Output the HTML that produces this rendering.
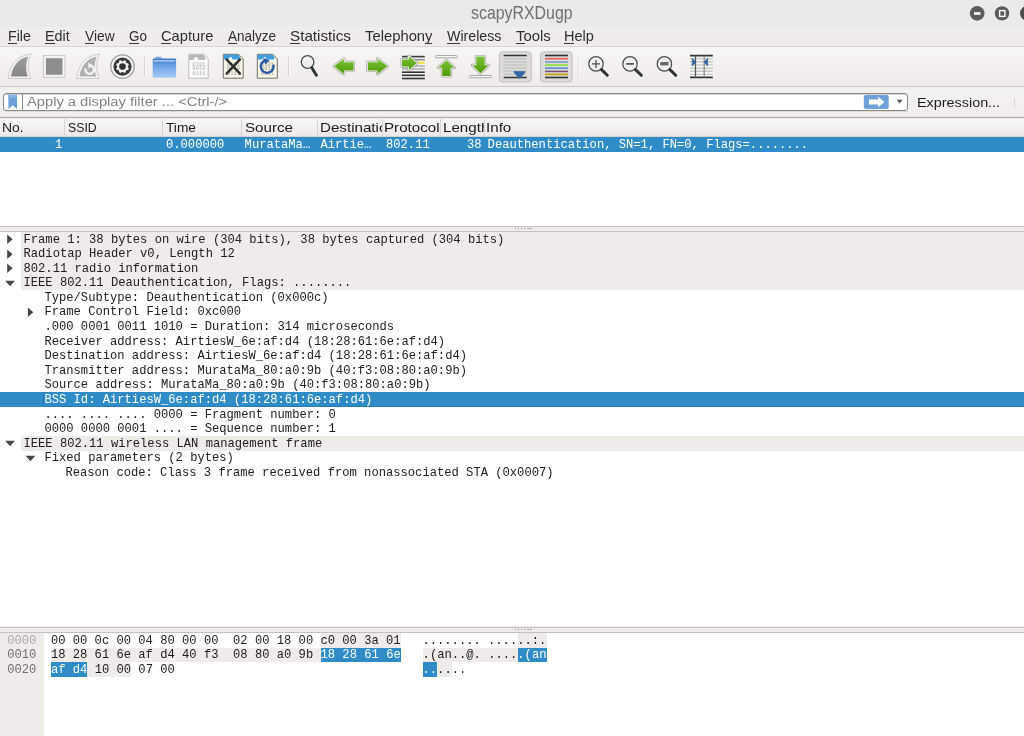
<!DOCTYPE html>
<html><head><meta charset="utf-8"><style>
*{margin:0;padding:0;box-sizing:border-box}
html,body{width:1024px;height:736px;overflow:hidden;background:#efebe7;font-family:"Liberation Sans",sans-serif;position:relative}
.a{position:absolute}
.m{position:absolute;font-family:"Liberation Mono",monospace;white-space:pre;line-height:1}
u{text-decoration:none;position:relative}
</style></head><body>
<div style="position:absolute;left:0;top:0;width:1024px;height:736px;overflow:hidden;will-change:transform">
<div class="a" style="left:0;top:0;width:1024px;height:27px;background:#eaeaea"></div>
<div class="a" style="left:470.52px;top:4.35px;font-size:18.31px;line-height:1;color:#707070;white-space:nowrap;transform-origin:0 0;transform:scaleX(0.8683);">scapyRXDugp</div>
<svg class="a" style="left:0;top:0" width="1024" height="27" viewBox="0 0 1024 27">
<circle cx="977.2" cy="13.4" r="7.3" fill="#5c5c5c"/>
<rect x="974" y="12.2" width="6.5" height="2.6" fill="#fff"/>
<circle cx="1002" cy="13.4" r="7.2" fill="#5c5c5c"/>
<rect x="999.6" y="10.6" width="5.3" height="5.8" fill="none" stroke="#fff" stroke-width="1.4"/>
<circle cx="1027.3" cy="13.4" r="7.3" fill="#4a4a4a"/>
</svg>
<div class="a" style="left:0;top:27px;width:1024px;height:19px;background:linear-gradient(#f0edea,#eeebe7)"></div>
<div class="a" style="left:8.26px;top:28.67px;font-size:14.10px;line-height:1;color:#2e2e2e;white-space:nowrap;transform-origin:0 0;transform:scaleX(1.0078);">File</div>
<div class="a" style="left:8.26px;top:42.8px;width:8.68px;height:1.2px;background:#3a3a3a"></div>
<div class="a" style="left:44.96px;top:28.67px;font-size:14.10px;line-height:1;color:#2e2e2e;white-space:nowrap;transform-origin:0 0;transform:scaleX(1.0151);">Edit</div>
<div class="a" style="left:44.96px;top:42.8px;width:9.55px;height:1.2px;background:#3a3a3a"></div>
<div class="a" style="left:85.13px;top:28.67px;font-size:14.10px;line-height:1;color:#2e2e2e;white-space:nowrap;transform-origin:0 0;transform:scaleX(0.9788);">View</div>
<div class="a" style="left:85.13px;top:42.8px;width:9.20px;height:1.2px;background:#3a3a3a"></div>
<div class="a" style="left:128.73px;top:28.67px;font-size:14.10px;line-height:1;color:#2e2e2e;white-space:nowrap;transform-origin:0 0;transform:scaleX(0.9514);">Go</div>
<div class="a" style="left:128.73px;top:42.8px;width:10.43px;height:1.2px;background:#3a3a3a"></div>
<div class="a" style="left:160.86px;top:28.67px;font-size:14.10px;line-height:1;color:#2e2e2e;white-space:nowrap;transform-origin:0 0;transform:scaleX(1.0434);">Capture</div>
<div class="a" style="left:160.86px;top:42.8px;width:10.62px;height:1.2px;background:#3a3a3a"></div>
<div class="a" style="left:227.63px;top:28.67px;font-size:14.10px;line-height:1;color:#2e2e2e;white-space:nowrap;transform-origin:0 0;transform:scaleX(0.9572);">Analyze</div>
<div class="a" style="left:227.63px;top:42.8px;width:9.00px;height:1.2px;background:#3a3a3a"></div>
<div class="a" style="left:289.91px;top:28.67px;font-size:14.10px;line-height:1;color:#2e2e2e;white-space:nowrap;transform-origin:0 0;transform:scaleX(1.0802);">Statistics</div>
<div class="a" style="left:289.91px;top:42.8px;width:10.16px;height:1.2px;background:#3a3a3a"></div>
<div class="a" style="left:364.83px;top:28.67px;font-size:14.10px;line-height:1;color:#2e2e2e;white-space:nowrap;transform-origin:0 0;transform:scaleX(1.0506);">Telephony</div>
<div class="a" style="left:424.96px;top:42.8px;width:7.41px;height:1.2px;background:#3a3a3a"></div>
<div class="a" style="left:446.93px;top:28.67px;font-size:14.10px;line-height:1;color:#2e2e2e;white-space:nowrap;transform-origin:0 0;transform:scaleX(1.0074);">Wireless</div>
<div class="a" style="left:446.93px;top:42.8px;width:13.41px;height:1.2px;background:#3a3a3a"></div>
<div class="a" style="left:515.88px;top:28.67px;font-size:14.10px;line-height:1;color:#2e2e2e;white-space:nowrap;transform-origin:0 0;transform:scaleX(1.0584);">Tools</div>
<div class="a" style="left:515.88px;top:42.8px;width:9.12px;height:1.2px;background:#3a3a3a"></div>
<div class="a" style="left:563.84px;top:28.67px;font-size:14.10px;line-height:1;color:#2e2e2e;white-space:nowrap;transform-origin:0 0;transform:scaleX(1.0300);">Help</div>
<div class="a" style="left:563.84px;top:42.8px;width:10.49px;height:1.2px;background:#3a3a3a"></div>
<div class="a" style="left:0;top:46px;width:1024px;height:1px;background:#d9d5d1"></div>
<div class="a" style="left:0;top:47px;width:1024px;height:39.5px;background:linear-gradient(#f8f6f4,#eeebe7)"></div>
<div class="a" style="left:0;top:87px;width:1024px;height:30px;background:linear-gradient(#f3f1ee,#f1eeeb)"></div>
<svg class="a" style="left:0;top:46px" width="1024" height="41" viewBox="0 46 1024 41">
<defs>
 <linearGradient id="gfin" x1="0" y1="0" x2="0" y2="1"><stop offset="0" stop-color="#9e9d9a"/><stop offset="1" stop-color="#878684"/></linearGradient>
 <linearGradient id="gfold" x1="0" y1="0" x2="0" y2="1"><stop offset="0" stop-color="#3a78cc"/><stop offset="0.35" stop-color="#6a9fe4"/><stop offset="1" stop-color="#a6ccf8"/></linearGradient>
 <linearGradient id="ggreen" x1="0" y1="0" x2="0" y2="1"><stop offset="0" stop-color="#7cc23a"/><stop offset="1" stop-color="#4e9a06"/></linearGradient>
</defs>
<!-- fin 1 -->
<path d="M8.3,78.5 C9.3,66 16,55.8 31,53.9 C27.6,61 27.2,70 30.7,78.5 Z" fill="#f7f6f4" stroke="#c6c3bf" stroke-width="0.9"/>
<path d="M11,76.6 C12.2,67 17.8,58.6 28.2,56.6 C25.7,63 25.4,70 27.8,76.6 Z" fill="url(#gfin)"/>
<!-- stop -->
<rect x="43.4" y="55.6" width="21.6" height="21.7" fill="#f7f6f4" stroke="#c6c3bf" stroke-width="0.9"/>
<rect x="45.9" y="58.2" width="16.6" height="16.6" fill="#8e8d8a"/>
<!-- restart fin -->
<path d="M76.8,78.5 C77.8,66 84.5,55.8 99.5,53.9 C96.1,61 95.7,70 99.2,78.5 Z" fill="#f7f6f4" stroke="#c6c3bf" stroke-width="0.9"/>
<path d="M79.5,76.6 C80.7,67 86.3,58.6 96.7,56.6 C94.2,63 93.9,70 96.3,76.6 Z" fill="#b2b1ae"/>
<path d="M85.6,68.6 A4.2,4.2 0 1 0 90.6,65.6" fill="none" stroke="#f7f6f4" stroke-width="2.3"/>
<path d="M88.2,62.6 L92.6,65.6 L88.4,68.6 Z" fill="#f7f6f4"/>
<!-- gear -->
<circle cx="122.5" cy="66.6" r="11.7" fill="#f6f5f3" stroke="#9c9c9a" stroke-width="1.3"/>
<circle cx="122.5" cy="66.6" r="9.1" fill="#3a3a3a"/>
<g fill="#f4f4f2" transform="rotate(22.5 122.5 66.6)">
 <circle cx="122.5" cy="66.6" r="5.4"/>
 <rect x="121.2" y="60.1" width="2.6" height="13" rx="0.6"/>
 <rect x="116" y="65.3" width="13" height="2.6" rx="0.6"/>
 <rect x="121.2" y="60.1" width="2.6" height="13" rx="0.6" transform="rotate(45 122.5 66.6)"/>
 <rect x="121.2" y="60.1" width="2.6" height="13" rx="0.6" transform="rotate(-45 122.5 66.6)"/>
</g>
<circle cx="122.5" cy="66.6" r="3.3" fill="#333"/>
<!-- sep -->
<rect x="144" y="57" width="1" height="20" fill="#d8d4d0"/><rect x="145" y="57" width="1" height="20" fill="#fbfaf9"/>
<!-- folder -->
<path d="M154.9,58.8 L155.8,56.8 L161,56.8 L161.8,58.8 Z" fill="#7aa5e0"/>
<rect x="152.7" y="58.6" width="23.4" height="19.1" rx="1.2" fill="url(#gfold)"/>
<rect x="153.5" y="60.2" width="21.8" height="1.4" fill="#c0d6f0" opacity="0.9"/>
<!-- doc gray -->
<path d="M188.8,54.3 L203.6,54.3 L208.2,58.9 L208.2,78.2 L188.8,78.2 Z" fill="#fcfbf9" stroke="#b5b4b1" stroke-width="0.9"/>
<path d="M189.2,54.7 L203.4,54.7 L205.2,57.5 L205.2,60 L198,60 C197.5,57.5 196.8,56.8 196,57 C194.5,57.6 193.6,59 193.5,60 L189.2,60 Z" fill="#b9b8b5"/>
<g fill="#c4c3c0" font-family="Liberation Mono" font-size="5.6" font-weight="bold"><text x="192.3" y="65.6">0101</text><text x="192.3" y="70.3">0010</text><text x="192.3" y="75">0111</text></g>
<!-- doc close -->
<path d="M223.3,54.3 L238.5,54.3 L243.2,59 L243.2,78.2 L223.3,78.2 Z" fill="#f7f6e6" stroke="#6e6e6c" stroke-width="1"/>
<path d="M223.8,54.8 L238.3,54.8 L240,57 L240,59.6 L232.5,59.6 C232.2,57.5 231.5,56.8 230.6,57.1 C229,57.6 228.2,58.8 228,59.6 L223.8,59.6 Z" fill="#3d9fe0"/>
<g fill="#b8b8b0" font-family="Liberation Mono" font-size="5.6" font-weight="bold"><text x="226.8" y="65.6">0101</text><text x="226.8" y="70.3">0010</text><text x="226.8" y="75">0111</text></g>
<path d="M226.6,59.4 L240,73.6 M240,59.4 L226.6,73.6" stroke="#2c2c2c" stroke-width="2.3" stroke-linecap="round"/>
<!-- doc reload -->
<path d="M257.3,54.3 L272.8,54.3 L277.3,59 L277.3,78.2 L257.3,78.2 Z" fill="#f7f6e6" stroke="#6e6e6c" stroke-width="1"/>
<path d="M257.8,54.8 L272.5,54.8 L274.2,57 L274.2,59.6 L266.5,59.6 C266.2,57.5 265.5,56.8 264.6,57.1 C263,57.6 262.2,58.8 262,59.6 L257.8,59.6 Z" fill="#3d9fe0"/>
<g fill="#b8b8b0" font-family="Liberation Mono" font-size="5.6" font-weight="bold"><text x="260.8" y="65.6">0101</text><text x="260.8" y="70.3">0010</text><text x="260.8" y="75">0111</text></g>
<path d="M264.5,60.6 A6.4,6.4 0 1 0 273.3,64.6" fill="none" stroke="#2a58a6" stroke-width="2.4"/>
<path d="M263,58 L269.8,60.3 L265.3,64.6 Z" fill="#2a58a6"/>
<!-- sep -->
<rect x="288" y="57" width="1" height="20" fill="#d8d4d0"/><rect x="289" y="57" width="1" height="20" fill="#fbfaf9"/>
<!-- search -->
<circle cx="307.6" cy="62" r="6.3" fill="#efefed" stroke="#4a4d4e" stroke-width="1.25"/>
<path d="M304.5,59.5 A3.5,3.5 0 0 1 307.5,58" stroke="#fff" stroke-width="1" fill="none"/>
<path d="M311.8,67.8 L316.4,75.2" stroke="#2e3436" stroke-width="3" stroke-linecap="round"/>
<!-- back -->
<path d="M333.9,66.3 L343.9,58.7 L343.9,62.3 L353.6,62.3 L353.6,70.4 L343.9,70.4 L343.9,74 Z" fill="none" stroke="#9a9a98" stroke-width="2.9" stroke-linejoin="round"/><path d="M333.9,66.3 L343.9,58.7 L343.9,62.3 L353.6,62.3 L353.6,70.4 L343.9,70.4 L343.9,74 Z" fill="none" stroke="#ffffff" stroke-width="1.5" stroke-linejoin="round"/><path d="M333.9,66.3 L343.9,58.7 L343.9,62.3 L353.6,62.3 L353.6,70.4 L343.9,70.4 L343.9,74 Z" fill="url(#ggreen)"/>
<!-- forward -->
<path d="M387.5,66.3 L377.5,58.7 L377.5,62.3 L367.8,62.3 L367.8,70.4 L377.5,70.4 L377.5,74 Z" fill="none" stroke="#9a9a98" stroke-width="2.9" stroke-linejoin="round"/><path d="M387.5,66.3 L377.5,58.7 L377.5,62.3 L367.8,62.3 L367.8,70.4 L377.5,70.4 L377.5,74 Z" fill="none" stroke="#ffffff" stroke-width="1.5" stroke-linejoin="round"/><path d="M387.5,66.3 L377.5,58.7 L377.5,62.3 L367.8,62.3 L367.8,70.4 L377.5,70.4 L377.5,74 Z" fill="url(#ggreen)"/>
<!-- goto packet -->
<g stroke-width="1.6">
 <path d="M402,56.6 H424.8" stroke="#3a3d3e"/>
 <path d="M402,59.7 H424.8" stroke="#8a8c88"/>
 <path d="M402,66 H424.8" stroke="#b0b2ae"/>
 <path d="M402,69 H424.8" stroke="#b0b2ae"/>
 <path d="M402,72.2 H424.8" stroke="#2e3436"/>
 <path d="M402,75.3 H424.8" stroke="#2e3436"/>
 <path d="M402,78.5 H424.8" stroke="#2e3436"/>
 <path d="M416,62.8 H424.8" stroke="#f0e040" stroke-width="2"/>
</g>
<path d="M416.8,63 L408.8,56 L408.8,59.4 L402,59.4 L402,66.6 L408.8,66.6 L408.8,70 Z" fill="none" stroke="#9a9a98" stroke-width="2.9" stroke-linejoin="round"/><path d="M416.8,63 L408.8,56 L408.8,59.4 L402,59.4 L402,66.6 L408.8,66.6 L408.8,70 Z" fill="none" stroke="#ffffff" stroke-width="1.5" stroke-linejoin="round"/><path d="M416.8,63 L408.8,56 L408.8,59.4 L402,59.4 L402,66.6 L408.8,66.6 L408.8,70 Z" fill="url(#ggreen)"/>
<!-- first -->
<rect x="435.4" y="55.6" width="22" height="2.2" rx="1.1" fill="#fff" stroke="#8e8e8c" stroke-width="0.8"/>
<path d="M446.4,60.3 L454.6,67.8 L450.6,67.8 L450.6,76 L442.2,76 L442.2,67.8 L438.2,67.8 Z" fill="none" stroke="#9a9a98" stroke-width="2.9" stroke-linejoin="round"/><path d="M446.4,60.3 L454.6,67.8 L450.6,67.8 L450.6,76 L442.2,76 L442.2,67.8 L438.2,67.8 Z" fill="none" stroke="#ffffff" stroke-width="1.5" stroke-linejoin="round"/><path d="M446.4,60.3 L454.6,67.8 L450.6,67.8 L450.6,76 L442.2,76 L442.2,67.8 L438.2,67.8 Z" fill="url(#ggreen)"/>
<!-- last -->
<path d="M480.5,73.2 L488.7,65.2 L484.7,65.2 L484.7,56.6 L476.3,56.6 L476.3,65.2 L472.3,65.2 Z" fill="none" stroke="#9a9a98" stroke-width="2.9" stroke-linejoin="round"/><path d="M480.5,73.2 L488.7,65.2 L484.7,65.2 L484.7,56.6 L476.3,56.6 L476.3,65.2 L472.3,65.2 Z" fill="none" stroke="#ffffff" stroke-width="1.5" stroke-linejoin="round"/><path d="M480.5,73.2 L488.7,65.2 L484.7,65.2 L484.7,56.6 L476.3,56.6 L476.3,65.2 L472.3,65.2 Z" fill="url(#ggreen)"/>
<rect x="469.5" y="75.5" width="22" height="2.2" rx="1.1" fill="#fff" stroke="#8e8e8c" stroke-width="0.8"/>
<!-- pressed 1 -->
<rect x="499.3" y="51.8" width="32" height="30.2" rx="3.2" fill="#dddbd8" stroke="#c2beba" stroke-width="1"/>
<g stroke-width="1.5">
 <path d="M503.7,55.5 H526.7" stroke="#2e3436"/>
 <path d="M503.7,58.7 H526.7 M503.7,62 H526.7 M503.7,65 H526.7 M503.7,68 H526.7 M503.7,71 H526.7 M503.7,74.2 H526.7" stroke="#c5c9c3"/>
 <path d="M503.7,77.5 H526.7" stroke="#2e3436"/>
</g>
<path d="M514,71.8 L525,71.8 L519.5,78.2 Z" fill="#3465a4" stroke="#3465a4" stroke-width="1.2" stroke-linejoin="round"/>
<rect x="536.3" y="57" width="1" height="20" fill="#fbfaf9"/>
<!-- pressed 2 -->
<rect x="540.6" y="51.8" width="31.5" height="30.2" rx="3.2" fill="#dddbd8" stroke="#c2beba" stroke-width="1"/>
<g stroke-width="1.6">
 <path d="M545,55.5 H568" stroke="#2e3436"/>
 <path d="M545,58.7 H568" stroke="#e85c5c"/>
 <path d="M545,62 H568" stroke="#729fcf"/>
 <path d="M545,65 H568" stroke="#8ae234"/>
 <path d="M545,68.2 H568" stroke="#5f8fc7"/>
 <path d="M545,71.4 H568" stroke="#75507b"/>
 <path d="M545,74.4 H568" stroke="#c4a000"/>
 <path d="M545,77.5 H568" stroke="#2e3436"/>
</g>
<rect x="577.7" y="57" width="1" height="20" fill="#d8d4d0"/><rect x="578.7" y="57" width="1" height="20" fill="#fbfaf9"/>
<!-- zoom in/out/1:1 -->
<g>
 <circle cx="596" cy="63.9" r="7.2" fill="#efefed" stroke="#4a4d4e" stroke-width="1.25"/>
 <path d="M601.5,69.6 L607.3,75.3" stroke="#2e3436" stroke-width="3" stroke-linecap="round"/>
 <path d="M592,63.9 H600 M596,59.9 V67.9" stroke="#4a4d4e" stroke-width="1.25"/>
 <circle cx="630" cy="63.9" r="7.2" fill="#efefed" stroke="#4a4d4e" stroke-width="1.25"/>
 <path d="M635.5,69.6 L641.3,75.3" stroke="#2e3436" stroke-width="3" stroke-linecap="round"/>
 <path d="M626.2,63.9 H633.8" stroke="#555" stroke-width="1.8"/>
 <circle cx="664.4" cy="63.9" r="7.2" fill="#efefed" stroke="#4a4d4e" stroke-width="1.25"/>
 <path d="M669.9,69.6 L675.7,75.3" stroke="#2e3436" stroke-width="3" stroke-linecap="round"/>
 <rect x="660.3" y="62" width="8.2" height="3.4" fill="#666"/>
</g>
<!-- resize columns -->
<g>
 <rect x="690" y="55.6" width="22.8" height="22" fill="#f6f6f4"/>
 <path d="M690,58.65 H712.8 M690,61.7 H712.8 M690,64.9 H712.8 M690,68.2 H712.8 M690,71.2 H712.8 M690,74.4 H712.8" stroke="#c5c9c3" stroke-width="1.4"/>
 <path d="M690,55.6 H712.8 M690,77.4 H712.8" stroke="#2e3436" stroke-width="1.6"/>
 <path d="M695.5,55.6 V77.4" stroke="#555753" stroke-width="1.2"/>
 <path d="M704.2,55.6 V77.4" stroke="#888a85" stroke-width="1.2"/>
 <path d="M692.3,58.6 L696,62.2 L692.3,65.8 Z" fill="#3465a4" stroke="#3465a4" stroke-width="0.8" stroke-linejoin="round"/>
 <path d="M707.6,58.6 L704,62.2 L707.6,65.8 Z" fill="#3465a4" stroke="#3465a4" stroke-width="0.8" stroke-linejoin="round"/>
</g>
</svg>
<div class="a" style="left:0;top:86px;width:1024px;height:1px;background:#cbc7c3"></div>
<div class="a" style="left:3.4px;top:92.5px;width:904.4px;height:18.6px;background:#fff;border:1px solid #8b8885;border-radius:3px;box-shadow:inset 0 1px 0 #d8d5d2"></div>
<div class="a" style="left:22px;top:93.5px;width:1px;height:17px;background:#8f8c88"></div>
<svg class="a" style="left:0;top:87px" width="30" height="30" viewBox="0 87 30 30"><path d="M8.4,94.8 H17.1 V109 L12.75,105.2 L8.4,109 Z" fill="#6d9fd9"/><path d="M8.4,94.8 H17.1 V98 H8.4Z" fill="#88b2e2"/></svg>
<svg class="a" style="left:850px;top:87px" width="70" height="30" viewBox="850 87 70 30">
<rect x="863.8" y="95" width="24.9" height="13.9" rx="2" fill="#6fa1da"/>
<path d="M869,99.6 H878 V96.8 L884.5,102 L878,107.2 V104.4 H869 Z" fill="#fff"/>
<path d="M896.8,99.8 H902.6 L899.7,103.4 Z" fill="#555"/>
</svg>
<div class="a" style="left:1013.5px;top:98px;width:1px;height:9.5px;background:#d6d2ce"></div>
<div class="a" style="left:0;top:116.5px;width:1024px;height:1.5px;background:#b4b0ac"></div>
<div class="a" style="left:3px;top:111px;width:905px;height:1px;background:#dedbd8"></div>
<div class="a" style="left:0;top:115.5px;width:1024px;height:1px;background:#e2dfdc"></div>
<div class="a" style="left:27.23px;top:94.56px;font-size:13.52px;line-height:1;color:#828282;white-space:nowrap;transform-origin:0 0;transform:scaleX(1.0878);">Apply a display filter ... &lt;Ctrl-/&gt;</div>
<div class="a" style="left:917.45px;top:96.13px;font-size:13.66px;line-height:1;color:#1e1e1e;white-space:nowrap;transform-origin:0 0;transform:scaleX(1.0528);">Expression...</div>
<div class="a" style="left:0;top:118px;width:1024px;height:108px;background:#fff"></div>
<div class="a" style="left:0;top:118px;width:1024px;height:18.5px;background:linear-gradient(#dedad6 0,#f8f7f5 1px,#f3f1ee 50%,#eae7e3)"></div>
<div class="a" style="left:0;top:135.8px;width:1024px;height:1px;background:#d6d2ce"></div>
<div class="a" style="left:64.0px;top:119px;width:1px;height:17px;background:#d8d4d0"></div>
<div class="a" style="left:162.2px;top:119px;width:1px;height:17px;background:#d8d4d0"></div>
<div class="a" style="left:241.3px;top:119px;width:1px;height:17px;background:#d8d4d0"></div>
<div class="a" style="left:317.1px;top:119px;width:1px;height:17px;background:#d8d4d0"></div>
<div class="a" style="left:381.7px;top:119px;width:1px;height:17px;background:#d8d4d0"></div>
<div class="a" style="left:439.7px;top:119px;width:1px;height:17px;background:#d8d4d0"></div>
<div class="a" style="left:483.9px;top:119px;width:1px;height:17px;background:#d8d4d0"></div>
<div class="a" style="left:2.09px;top:121.75px;font-size:12.94px;line-height:1;color:#1a1a1a;white-space:nowrap;transform-origin:0 0;transform:scaleX(1.0772);">No.</div>
<div class="a" style="left:68.05px;top:121.75px;font-size:12.94px;line-height:1;color:#1a1a1a;white-space:nowrap;transform-origin:0 0;transform:scaleX(0.9490);">SSID</div>
<div class="a" style="left:165.56px;top:121.75px;font-size:12.94px;line-height:1;color:#1a1a1a;white-space:nowrap;transform-origin:0 0;transform:scaleX(1.0599);">Time</div>
<div class="a" style="left:244.62px;top:121.75px;font-size:12.94px;line-height:1;color:#1a1a1a;white-space:nowrap;transform-origin:0 0;transform:scaleX(1.1705)">Source</div>
<div class="a" style="left:319.69px;top:118.75px;width:61.91px;height:18px;overflow:hidden"><div class="a" style="left:0;top:3px;font-size:12.94px;line-height:1;color:#1a1a1a;white-space:nowrap;transform-origin:0 0;transform:scaleX(1.1705)">Destination</div></div>
<div class="a" style="left:384.39px;top:118.75px;width:55.31px;height:18px;overflow:hidden"><div class="a" style="left:0;top:3px;font-size:12.94px;line-height:1;color:#1a1a1a;white-space:nowrap;transform-origin:0 0;transform:scaleX(1.1705)">Protocol</div></div>
<div class="a" style="left:442.79px;top:118.75px;width:40.81px;height:18px;overflow:hidden"><div class="a" style="left:0;top:3px;font-size:12.94px;line-height:1;color:#1a1a1a;white-space:nowrap;transform-origin:0 0;transform:scaleX(1.1705)">Length</div></div>
<div class="a" style="left:486.04px;top:121.75px;font-size:12.94px;line-height:1;color:#1a1a1a;white-space:nowrap;transform-origin:0 0;transform:scaleX(1.1705)">Info</div>
<div class="a" style="left:0;top:136.9px;width:1024px;height:15.0px;background:#308cc6"></div>
<div class="m" style="left:54.90px;top:139.36px;font-size:12.15px;color:#fff;">1</div>
<div class="m" style="left:166.00px;top:139.36px;font-size:12.15px;color:#fff;">0.000000</div>
<div class="m" style="left:244.60px;top:139.36px;font-size:12.15px;color:#fff;">MurataMa…</div>
<div class="m" style="left:320.40px;top:139.36px;font-size:12.15px;color:#fff;">Airtie…</div>
<div class="m" style="left:386.00px;top:139.36px;font-size:12.15px;color:#fff;">802.11</div>
<div class="m" style="left:467.02px;top:139.36px;font-size:12.15px;color:#fff;">38</div>
<div class="m" style="left:487.60px;top:139.36px;font-size:12.15px;color:#fff;">Deauthentication, SN=1, FN=0, Flags=........</div>
<div class="a" style="left:0;top:226px;width:1024px;height:1px;background:#c4c0bc"></div>
<div class="a" style="left:0;top:231px;width:1024px;height:1px;background:#c4c0bc"></div>
<div class="a" style="left:515.20px;top:228px;width:1.2px;height:1.2px;background:#9c9894"></div>
<div class="a" style="left:515.20px;top:628.8px;width:1.2px;height:1.2px;background:#9c9894"></div>
<div class="a" style="left:518.23px;top:228px;width:1.2px;height:1.2px;background:#9c9894"></div>
<div class="a" style="left:518.23px;top:628.8px;width:1.2px;height:1.2px;background:#9c9894"></div>
<div class="a" style="left:521.26px;top:228px;width:1.2px;height:1.2px;background:#9c9894"></div>
<div class="a" style="left:521.26px;top:628.8px;width:1.2px;height:1.2px;background:#9c9894"></div>
<div class="a" style="left:524.29px;top:228px;width:1.2px;height:1.2px;background:#9c9894"></div>
<div class="a" style="left:524.29px;top:628.8px;width:1.2px;height:1.2px;background:#9c9894"></div>
<div class="a" style="left:527.32px;top:228px;width:1.2px;height:1.2px;background:#9c9894"></div>
<div class="a" style="left:527.32px;top:628.8px;width:1.2px;height:1.2px;background:#9c9894"></div>
<div class="a" style="left:530.35px;top:228px;width:1.2px;height:1.2px;background:#9c9894"></div>
<div class="a" style="left:530.35px;top:628.8px;width:1.2px;height:1.2px;background:#9c9894"></div>
<div class="a" style="left:0;top:232px;width:1024px;height:394px;background:#fff"></div>
<div class="a" style="left:20.8px;top:232.00px;width:1003.2px;height:14.58px;background:#efebe7"></div>
<svg class="a" style="left:0;top:232.00px" width="60" height="15" viewBox="0 0 60 14.55"><path d="M7.2,2.3 L12.600000000000001,7.0 L7.2,11.7 Z" fill="#464646"/></svg>
<div class="m" style="left:23.50px;top:233.54px;font-size:12.15px;color:#202020;">Frame 1: 38 bytes on wire (304 bits), 38 bytes captured (304 bits)</div>
<div class="a" style="left:20.8px;top:246.58px;width:1003.2px;height:14.58px;background:#efebe7"></div>
<svg class="a" style="left:0;top:246.58px" width="60" height="15" viewBox="0 0 60 14.55"><path d="M7.2,2.3 L12.600000000000001,7.0 L7.2,11.7 Z" fill="#464646"/></svg>
<div class="m" style="left:23.50px;top:248.12px;font-size:12.15px;color:#202020;">Radiotap Header v0, Length 12</div>
<div class="a" style="left:20.8px;top:261.16px;width:1003.2px;height:14.58px;background:#efebe7"></div>
<svg class="a" style="left:0;top:261.16px" width="60" height="15" viewBox="0 0 60 14.55"><path d="M7.2,2.3 L12.600000000000001,7.0 L7.2,11.7 Z" fill="#464646"/></svg>
<div class="m" style="left:23.50px;top:262.70px;font-size:12.15px;color:#202020;">802.11 radio information</div>
<div class="a" style="left:20.8px;top:275.74px;width:1003.2px;height:14.58px;background:#efebe7"></div>
<svg class="a" style="left:0;top:275.74px" width="60" height="15" viewBox="0 0 60 14.55"><path d="M5.2,4.5 L14.9,4.5 L10.05,9.9 Z" fill="#464646"/></svg>
<div class="m" style="left:23.50px;top:277.28px;font-size:12.15px;color:#202020;">IEEE 802.11 Deauthentication, Flags: ........</div>
<div class="m" style="left:44.45px;top:291.86px;font-size:12.15px;color:#202020;">Type/Subtype: Deauthentication (0x000c)</div>
<svg class="a" style="left:0;top:304.90px" width="60" height="15" viewBox="0 0 60 14.55"><path d="M27.9,2.3 L33.3,7.0 L27.9,11.7 Z" fill="#464646"/></svg>
<div class="m" style="left:44.45px;top:306.44px;font-size:12.15px;color:#202020;">Frame Control Field: 0xc000</div>
<div class="m" style="left:44.45px;top:321.02px;font-size:12.15px;color:#202020;">.000 0001 0011 1010 = Duration: 314 microseconds</div>
<div class="m" style="left:44.45px;top:335.60px;font-size:12.15px;color:#202020;">Receiver address: AirtiesW_6e:af:d4 (18:28:61:6e:af:d4)</div>
<div class="m" style="left:44.45px;top:350.18px;font-size:12.15px;color:#202020;">Destination address: AirtiesW_6e:af:d4 (18:28:61:6e:af:d4)</div>
<div class="m" style="left:44.45px;top:364.76px;font-size:12.15px;color:#202020;">Transmitter address: MurataMa_80:a0:9b (40:f3:08:80:a0:9b)</div>
<div class="m" style="left:44.45px;top:379.34px;font-size:12.15px;color:#202020;">Source address: MurataMa_80:a0:9b (40:f3:08:80:a0:9b)</div>
<div class="a" style="left:0;top:392.38px;width:1024px;height:14.58px;background:#308cc6"></div>
<div class="a" style="left:42.5px;top:392.38px;width:982px;height:14.58px;border-left:1px solid #2a7cb4;border-bottom:1px solid #2a7cb4"></div>
<div class="m" style="left:44.45px;top:393.92px;font-size:12.15px;color:#fff;">BSS Id: AirtiesW_6e:af:d4 (18:28:61:6e:af:d4)</div>
<div class="m" style="left:44.45px;top:408.50px;font-size:12.15px;color:#202020;">.... .... .... 0000 = Fragment number: 0</div>
<div class="m" style="left:44.45px;top:423.08px;font-size:12.15px;color:#202020;">0000 0000 0001 .... = Sequence number: 1</div>
<div class="a" style="left:20.8px;top:436.12px;width:1003.2px;height:14.58px;background:#efebe7"></div>
<svg class="a" style="left:0;top:436.12px" width="60" height="15" viewBox="0 0 60 14.55"><path d="M5.2,4.5 L14.9,4.5 L10.05,9.9 Z" fill="#464646"/></svg>
<div class="m" style="left:23.50px;top:437.66px;font-size:12.15px;color:#202020;">IEEE 802.11 wireless LAN management frame</div>
<svg class="a" style="left:0;top:450.70px" width="60" height="15" viewBox="0 0 60 14.55"><path d="M25.599999999999998,4.5 L35.3,4.5 L30.449999999999996,9.9 Z" fill="#464646"/></svg>
<div class="m" style="left:44.45px;top:452.24px;font-size:12.15px;color:#202020;">Fixed parameters (2 bytes)</div>
<div class="m" style="left:65.40px;top:466.82px;font-size:12.15px;color:#202020;">Reason code: Class 3 frame received from nonassociated STA (0x0007)</div>
<div class="a" style="left:0;top:627px;width:1024px;height:1px;background:#c4c0bc"></div>
<div class="a" style="left:0;top:632px;width:1024px;height:1px;background:#c4c0bc"></div>
<div class="a" style="left:0;top:633.0px;width:1024px;height:103.0px;background:#fff"></div>
<div class="a" style="left:0;top:633.0px;width:44px;height:103.0px;background:#efebe7"></div>
<div class="a" style="left:320.67px;top:633.00px;width:80.20px;height:14.58px;background:#efebe7"></div>
<div class="a" style="left:517.54px;top:633.00px;width:29.16px;height:14.58px;background:#efebe7"></div>
<div class="a" style="left:50.90px;top:647.58px;width:269.77px;height:14.58px;background:#efebe7"></div>
<div class="a" style="left:320.67px;top:647.58px;width:80.20px;height:14.58px;background:#308cc6"></div>
<div class="a" style="left:422.75px;top:647.58px;width:94.79px;height:14.58px;background:#efebe7"></div>
<div class="a" style="left:517.54px;top:647.58px;width:29.16px;height:14.58px;background:#308cc6"></div>
<div class="a" style="left:50.90px;top:662.16px;width:36.46px;height:14.58px;background:#308cc6"></div>
<div class="a" style="left:87.36px;top:662.16px;width:43.75px;height:14.58px;background:#efebe7"></div>
<div class="a" style="left:422.75px;top:662.16px;width:14.58px;height:14.58px;background:#308cc6"></div>
<div class="a" style="left:437.33px;top:662.16px;width:14.58px;height:14.58px;background:#efebe7"></div>
<div class="m" style="left:7.15px;top:634.54px;font-size:12.15px;color:#ababab;">0000</div>
<div class="m" style="left:50.90px;top:634.54px;font-size:12.15px;color:#1c1c1c">00 00 0c 00 04 80 00 00  02 00 18 00 c0 00 3a 01   ........ ......:.</div>
<div class="m" style="left:7.15px;top:649.12px;font-size:12.15px;color:#707070;">0010</div>
<div class="m" style="left:50.90px;top:649.12px;font-size:12.15px;color:#1c1c1c">18 28 61 6e af d4 40 f3  08 80 a0 9b <span style="color:#fff">1</span><span style="color:#fff">8</span><span style="color:#fff"> </span><span style="color:#fff">2</span><span style="color:#fff">8</span><span style="color:#fff"> </span><span style="color:#fff">6</span><span style="color:#fff">1</span><span style="color:#fff"> </span><span style="color:#fff">6</span><span style="color:#fff">e</span>   .(an..@. ....<span style="color:#fff">.</span><span style="color:#fff">(</span><span style="color:#fff">a</span><span style="color:#fff">n</span></div>
<div class="m" style="left:7.15px;top:663.70px;font-size:12.15px;color:#707070;">0020</div>
<div class="m" style="left:50.90px;top:663.70px;font-size:12.15px;color:#1c1c1c"><span style="color:#fff">a</span><span style="color:#fff">f</span><span style="color:#fff"> </span><span style="color:#fff">d</span><span style="color:#fff">4</span> 10 00 07 00                                  <span style="color:#fff">.</span><span style="color:#fff">.</span>....</div>
</div></body></html>
